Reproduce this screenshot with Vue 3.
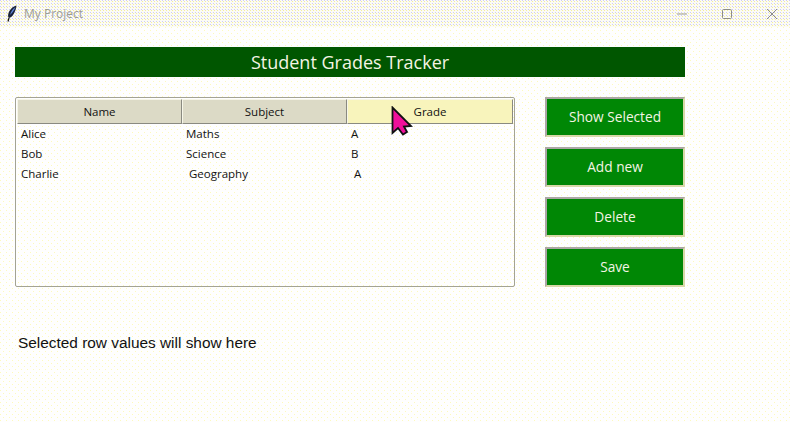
<script setup>
const columns = ['Name', 'Subject', 'Grade']
const rows = [
  ['Alice', 'Maths', 'A'],
  ['Bob', 'Science', 'B'],
  ['Charlie', ' Geography', ' A'],
]
const actions = ['Show Selected', 'Add new', 'Delete', 'Save']
</script>

<template>
  <div class="window">
    <div class="titlebar">
      <svg class="feather" width="10" height="17" viewBox="0 0 10 17">
        <path d="M9.500.500C5.500 1.500 2 5 1.200 9.500c-.3 1.800 0 3 .8 3.600C5.500 12 8.500 7.500 9.500.500Z" fill="#1a2238" />
        <path d="M8.500 2C6 3.500 3.800 6.500 3 10c1.800-1.500 4.200-4.500 5.500-8Z" fill="#5f86d8" />
        <path d="M2 13 1 16.500" stroke="#111" stroke-width="1.200" fill="none" />
      </svg>
      <span class="title">My Project</span>
      <div class="controls">
        <svg width="12" height="12" viewBox="0 0 12 12"><path d="M1 6h10" stroke="#9a9a94" /></svg>
        <svg width="12" height="12" viewBox="0 0 12 12"><rect x="1.500" y="1.500" width="9" height="9" rx="1" fill="none" stroke="#8e8e88" /></svg>
        <svg width="12" height="12" viewBox="0 0 12 12"><path d="M1 1l10 10M11 1 1 11" stroke="#8e8e88" /></svg>
      </div>
    </div>

    <main class="content">
      <h1 class="heading">Student Grades Tracker</h1>

      <div class="middle">
        <div class="table">
          <div class="head">
            <div
              v-for="(col, i) in columns"
              :key="col"
              class="head-cell"
              :class="{ hovered: i === 2 }"
            >{{ col }}</div>
          </div>
          <div v-for="row in rows" :key="row[0]" class="row">
            <span v-for="(cell, i) in row" :key="i" class="cell">{{ cell }}</span>
          </div>
        </div>

        <div class="actions">
          <button v-for="a in actions" :key="a" class="action">{{ a }}</button>
        </div>
      </div>

      <p class="selected">Selected row values will show here</p>
    </main>

    <svg class="cursor" width="22" height="30" viewBox="0 0 22 30">
      <path d="M1.500 1.500V27L7 22l5 6.500 4-2.500-3-5.500 7-.5Z" fill="#f0109a" stroke="#111" stroke-width="1.800" />
    </svg>
  </div>
</template>

<style scoped>
/* the source is a dithered gif, the dots are tiled 1px squares */
.window {
  position: relative;
  width: 790px;
  height: 422px;
  overflow: hidden;
  background-color: #fefefe;
  background-image:
    conic-gradient(at 1px 1px, transparent 75%, #fdf9bc 0),
    conic-gradient(at 1px 1px, transparent 75%, #fdf9bc 0);
  background-size: 6px 6px;
  background-position: 0 0, 3px 3px;
  font-family: "Open Sans", "Noto Sans", sans-serif;
}
.titlebar {
  display: flex;
  align-items: center;
  height: 27px;
  padding-left: 6px;
  background-color: #fbfbf6;
  background-image:
    conic-gradient(at 1px 1px, transparent 75%, #cfcdf2 0),
    conic-gradient(at 1px 1px, transparent 75%, #f4ee9c 0);
  background-size: 3px 3px;
  background-position: 0 0, 1px 1px;
}
.feather {
  margin-right: 8px;
  margin-left: 1px;
}
.title {
  margin-left: -1px;
  font-size: 12px;
  color: #9b9b95;
}
.controls {
  display: flex;
  gap: 33px;
  margin-left: auto;
  margin-right: 12px;
}
.content {
  padding: 20px 105px 0 15px;
}
.heading {
  height: 30px;
  margin: 0;
  background-color: #005600;
  color: #f4f4e4;
  font-size: 18px;
  font-weight: 400;
  line-height: 30px;
  text-align: center;
}
.middle {
  display: flex;
  justify-content: space-between;
  margin-top: 20px;
}
.table {
  box-sizing: border-box;
  width: 500px;
  height: 190px;
  padding: 1px;
  border: 1px solid #a3a394;
  border-radius: 2px;
}
.head {
  display: grid;
  grid-template-columns: 165px 165px 166px;
}
.head-cell {
  box-sizing: border-box;
  height: 25px;
  border: 1px solid #8a8a80;
  border-top-color: #f6f6e8;
  border-left-color: #f6f6e8;
  background-color: #dcdac6;
  color: #111;
  font-size: 11.500px;
  line-height: 24px;
  text-align: center;
}
.head-cell.hovered {
  background-color: #f8f4bc;
}
.row {
  display: grid;
  grid-template-columns: 165px 165px 166px;
  height: 20px;
}
.cell {
  padding-left: 4px;
  color: #111;
  font-size: 11.500px;
  line-height: 20px;
  white-space: pre;
}
.actions {
  display: flex;
  flex-direction: column;
  gap: 10px;
  width: 140px;
}
.action {
  height: 40px;
  padding: 0 0 2px;
  border: 2px solid;
  border-color: #aca6a4 #d8d8a8 #d8d8a8 #aca6a4;
  background-color: #008705;
  color: #f4f4e4;
  font-family: inherit;
  font-size: 13.700px;
}
.selected {
  margin: 45px 0 0 3px;
  color: #111;
  font-family: "Liberation Sans", Arial, sans-serif;
  font-size: 15.400px;
  line-height: 22px;
}
.cursor {
  position: absolute;
  left: 391px;
  top: 106px;
}
</style>
